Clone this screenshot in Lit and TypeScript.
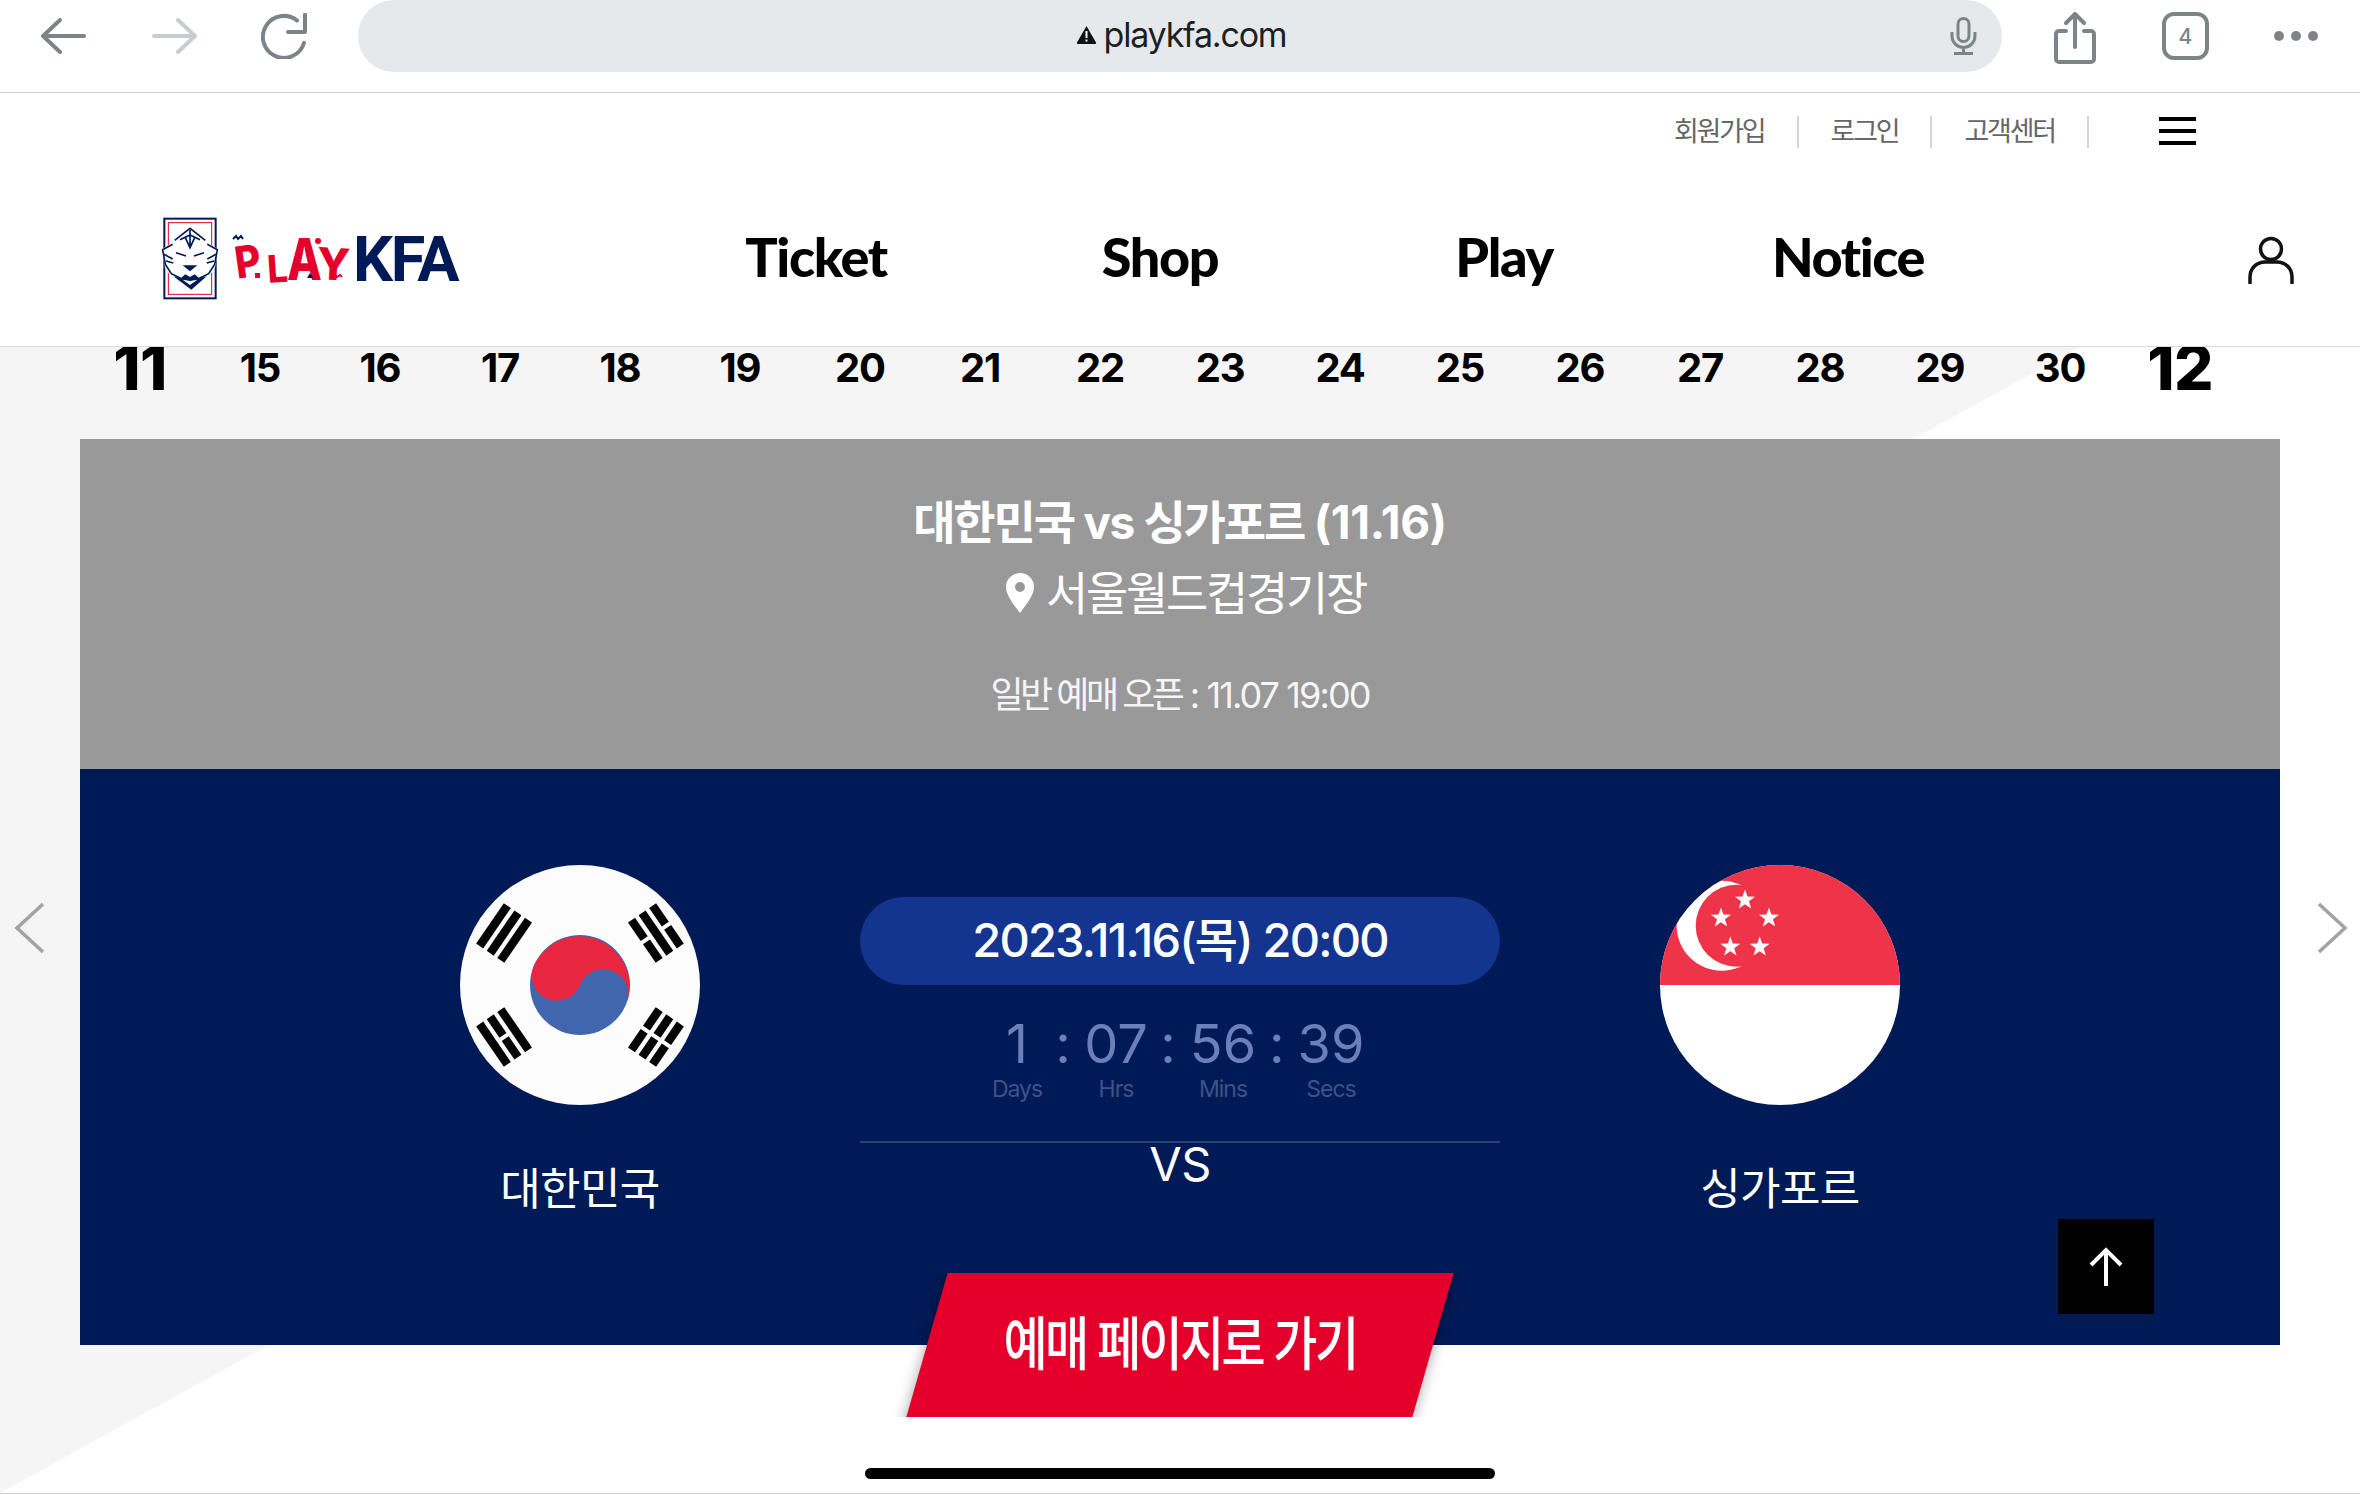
import { LitElement, html, css, svg } from "lit";
import { customElement } from "lit/decorators.js";

const star = (cx: number, cy: number, r: number) => {
  const pts: string[] = [];
  for (let i = 0; i < 10; i++) {
    const rad = i % 2 ? r * 0.4 : r;
    const a = (-90 + i * 36) * (Math.PI / 180);
    pts.push(`${(cx + rad * Math.cos(a)).toFixed(2)},${(cy + rad * Math.sin(a)).toFixed(2)}`);
  }
  return svg`<polygon points=${pts.join(" ")} fill="#fff"></polygon>`;
};

const trigram = (angle: number, pattern: boolean[]) => svg`
  <g transform="rotate(${angle} 120 120)" fill="#050505">
    ${pattern.map((solid, i) => {
      const y = 28 + (i - 1) * 12.8 - 4.25;
      return solid
        ? svg`<rect x="95.5" y=${y} width="49" height="8.5"></rect>`
        : svg`<rect x="95.5" y=${y} width="22.5" height="8.5"></rect><rect x="122" y=${y} width="22.5" height="8.5"></rect>`;
    })}
  </g>`;

const DATES = [15, 16, 17, 18, 19, 20, 21, 22, 23, 24, 25, 26, 27, 28, 29, 30];

@customElement("app-root")
export class AppRoot extends LitElement {
  static styles = css`
    :host {
      display: block;
      position: relative;
      width: 2360px;
      height: 1494px;
      overflow: hidden;
      background: #fff;
      font-family: Inter, "Noto Sans CJK KR", sans-serif;
      color: #000;
    }
    svg { display: block; }

    /* browser chrome */
    .toolbar {
      height: 92px;
      border-bottom: 1px solid #cfcfcf;
      display: flex;
      align-items: flex-start;
    }
    .back { margin: 18px 0 0 40px; }
    .forward { margin: 18px 0 0 66px; }
    .reload { margin: 13px 0 0 63px; }
    .url {
      margin-left: 51px;
      width: 1644px;
      height: 72px;
      border-radius: 36px;
      background: #e6e9ec;
      display: grid;
      grid-template-columns: 1fr auto 1fr;
      align-items: center;
    }
    .domain {
      grid-column: 2;
      display: flex;
      align-items: center;
      gap: 7px;
      font-size: 34px;
      letter-spacing: -1.2px;
      color: #1d1f21;
      margin-top: -3px;
    }
    .domain svg { margin-left: 2px; }
    .mic { grid-column: 3; justify-self: end; margin-right: 25px; }
    .share { margin: 12px 0 0 52px; }
    .tabs {
      margin: 12px 0 0 66px;
      width: 47px;
      height: 48px;
      box-sizing: border-box;
      border: 4px solid #7d8487;
      border-radius: 12px;
      display: flex;
      align-items: center;
      justify-content: center;
      font-size: 21px;
      font-weight: 500;
      color: #7d8487;
    }
    .dots { margin: 30px 0 0 64px; }

    /* site header */
    .header {
      height: 253px;
      border-bottom: 1px solid #d9d9d9;
      position: relative;
      z-index: 1;
      background: #fff;
    }
    .util {
      height: 79px;
      box-sizing: border-box;
      padding: 23px 164px 0 0;
      display: flex;
      justify-content: flex-end;
      align-items: flex-start;
      gap: 32px;
    }
    .util a {
      height: 32px;
      line-height: 32px;
      font-size: 27px;
      letter-spacing: -2.2px;
      color: #666;
    }
    .util i { width: 2px; height: 32px; background: #d5d5d5; }
    .burger {
      margin: 1px 0 0 38px;
      width: 37px;
      height: 28px;
      display: flex;
      flex-direction: column;
      justify-content: space-between;
    }
    .burger b { height: 4px; background: #000; }
    .nav {
      height: 172px;
      padding-bottom: 2px;
      display: flex;
      align-items: center;
      padding-left: 160px;
    }
    .logo { width: 484px; height: 90px; position: relative; display: flex; align-items: center; }
    .play {
      position: absolute;
      inset: 0;
      font-family: Inter, sans-serif;
      font-weight: 800;
      color: #e4002b;
      line-height: 1;
    }
    .play span { position: absolute; display: block; transform-origin: left top; }
    .p { left: 72px; top: 28px; font-size: 44px; transform: rotate(-8deg) scaleX(.9); }
    .dot1 { left: 95px; top: 60px; width: 5px; height: 5px; background: #e4002b; }
    .l { left: 106px; top: 37px; font-size: 38px; transform: rotate(-4deg) scaleX(.95); }
    .a { left: 127px; top: 17px; font-size: 58px; transform: scaleX(.78); }
    .y { left: 158px; top: 28px; font-size: 44px; transform: rotate(3deg); }
    .dot2 { left: 155px; top: 25px; width: 6px; height: 6px; border-radius: 50%; background: #e4002b; }
    .deco { position: absolute; left: 70px; top: 20px; }
    .kfa {
      position: absolute;
      left: 193px;
      top: 10px;
      font-family: Roboto, sans-serif;
      font-size: 63px;
      line-height: 74px;
      font-weight: 700;
      letter-spacing: -2.4px;
      color: #001a57;
    }
    .menu { display: grid; grid-template-columns: repeat(4, 344px); margin-top: -3px; }
    .menu a {
      text-align: center;
      font-family: Lato, sans-serif;
      font-size: 54px;
      font-weight: 900;
      letter-spacing: -1.4px;
      color: #000;
    }
    .user { margin: 3px 0 0 228px; }

    /* main */
    .main {
      height: 1146px;
      padding: 0 80px;
      border-bottom: 1px solid #cfcfcf;
      background-image: linear-gradient(to bottom right, #f5f5f5 49.95%, #fff 50.05%);
      background-size: 2080px 100%;
      background-repeat: no-repeat;
      position: relative;
    }
    .dates {
      height: 92px;
      display: grid;
      grid-template-columns: repeat(18, 120px);
      align-items: start;
    }
    .dates span {
      text-align: center;
      font-size: 40px;
      line-height: 42px;
      font-weight: 700;
      letter-spacing: -1.2px;
    }
    .dates .month {
      font-size: 62px;
      font-weight: 800;
      letter-spacing: -0.6px;
    }
    .info {
      height: 330px;
      box-sizing: border-box;
      padding-top: 48px;
      background: #999;
      color: #fff;
      text-align: center;
    }
    .title { font-size: 46px; line-height: 70px; font-weight: 700; letter-spacing: -1.4px; }
    .title .ko { letter-spacing: -2.15px; }
    .title .nums { letter-spacing: -0.3px; }
    .venue {
      font-size: 46px;
      line-height: 70px;
      font-weight: 400;
      letter-spacing: -2.3px;
      display: flex;
      justify-content: center;
      align-items: center;
      gap: 12px;
      padding-left: 12px;
      margin-top: 1px;
    }
    .open { margin-top: 42px; font-size: 36px; line-height: 50px; letter-spacing: -1.9px; color: #f6f6f6; }
    .open .ko { letter-spacing: -3.5px; }
    .match {
      height: 576px;
      background: #001a57;
      position: relative;
      display: flex;
      justify-content: center;
      gap: 120px;
      color: #fff;
    }
    .team { width: 320px; padding-top: 96px; text-align: center; }
    .flag { margin: 0 auto 54px; }
    .name { font-size: 44px; line-height: 60px; letter-spacing: -0.6px; }
    .center { width: 640px; padding-top: 128px; text-align: center; }
    .when {
      height: 88px;
      line-height: 86px;
      border-radius: 44px;
      background: #133590;
      font-size: 47px;
      font-weight: 500;
      letter-spacing: -1.8px;
    }
    .count {
      margin-top: 28px;
      display: grid;
      grid-template-columns: 72px 20px 86px 18px 92px 14px 96px;
      justify-content: center;
      grid-template-rows: 60px 32px;
      align-items: center;
    }
    .num { font-size: 54px; color: #6b80b8; }
    .lab { font-size: 23px; letter-spacing: -1px; color: #3f5187; }
    .rule { margin-top: 36px; height: 2px; background: #2b4277; }
    .vs { font-size: 47px; line-height: 42px; font-weight: 400; letter-spacing: -0.5px; }
    .cta {
      position: absolute;
      left: 800px;
      top: 504px;
      width: 600px;
      height: 144px;
      overflow: hidden;
      display: flex;
      align-items: center;
      justify-content: center;
      isolation: isolate;
    }
    .cta::before {
      content: "";
      position: absolute;
      z-index: -1;
      left: 47px;
      width: 506px;
      top: -30px;
      bottom: -30px;
      background: #e4002b;
      transform: skewX(-16deg);
      box-shadow: 0 0 14px rgba(0, 0, 0, 0.35);
    }
    .cta span {
      display: inline-block;
      font-size: 48px;
      font-weight: 500;
      letter-spacing: -2.6px;
      color: #fff;
      margin-top: -10px;
      transform: scaleY(1.2);
    }
    .top {
      position: absolute;
      left: 1978px;
      top: 450px;
      width: 96px;
      height: 95px;
      background: #000;
      display: flex;
      align-items: center;
      justify-content: center;
    }
    .chev { position: absolute; top: 555px; }
    .chev.l1 { left: 14px; }
    .chev.r1 { left: 2318px; }
    .home {
      position: absolute;
      left: 865px;
      top: 1121px;
      width: 630px;
      height: 11px;
      border-radius: 6px;
      background: #000;
    }
  `;

  render() {
    return html`
      <div class="toolbar">
        <svg class="back" width="46" height="36" viewBox="0 0 46 36" fill="none" stroke="#7d8487" stroke-width="4" stroke-linecap="round" stroke-linejoin="round"><path d="M44 18H4M20 2 3 18l17 16"/></svg>
        <svg class="forward" width="46" height="36" viewBox="0 0 46 36" fill="none" stroke="#c9cccd" stroke-width="4" stroke-linecap="round" stroke-linejoin="round"><path d="M2 18h40M26 2l17 16-17 16"/></svg>
        <svg class="reload" width="46" height="46" viewBox="0 0 46 46" fill="none" stroke="#7d8487" stroke-width="4" stroke-linecap="round"><path d="M36 7.500A21 21 0 1 0 43 30"/><path d="M44 1.500V19H27" stroke-linejoin="round"/></svg>
        <div class="url">
          <div class="domain">
            <svg width="21" height="19" viewBox="0 0 21 19"><path d="M10.500 1 20 17.500a1 1 0 0 1-1 1.500H2a1 1 0 0 1-1-1.500z" fill="#111"/><rect x="9.500" y="6" width="2" height="7" fill="#fff"/><rect x="9.500" y="14.500" width="2" height="2" fill="#fff"/></svg>
            playkfa.com
          </div>
          <svg class="mic" width="27" height="38" viewBox="0 0 27 38" fill="none" stroke="#7d8487" stroke-width="3"><rect x="8" y="1.500" width="11" height="23" rx="5.500"/><path d="M2 15v4a11.500 11.500 0 0 0 23 0v-4M13.500 31v5M4 36.500h19"/></svg>
        </div>
        <svg class="share" width="42" height="52" viewBox="0 0 42 52" fill="none" stroke="#7d8487" stroke-width="4" stroke-linecap="round" stroke-linejoin="round"><path d="M21 3v32M12 11l9-9 9 9"/><path d="M12 19H5a3 3 0 0 0-3 3v25a3 3 0 0 0 3 3h32a3 3 0 0 0 3-3V22a3 3 0 0 0-3-3h-7"/></svg>
        <div class="tabs">4</div>
        <svg class="dots" width="46" height="12" viewBox="0 0 46 12" fill="#7d8487"><circle cx="6" cy="6" r="5"/><circle cx="23" cy="6" r="5"/><circle cx="40" cy="6" r="5"/></svg>
      </div>

      <div class="header">
        <div class="util">
          <a>회원가입</a><i></i><a>로그인</a><i></i><a>고객센터</a><i></i>
          <div class="burger"><b></b><b></b><b></b></div>
        </div>
        <div class="nav">
          <div class="logo">
            <svg width="60" height="85" viewBox="60 55 180 255">
              <rect x="73" y="63" width="154" height="239" fill="#fff" stroke="#001a57" stroke-width="6"/>
              <rect x="85" y="75" width="130" height="215" fill="#fff" stroke="#e4002b" stroke-width="3"/>
              <path d="M150 88 195 130l40 25-10 55-20 30-55 38-55-38-20-30-10-55 40-25z" fill="#fff"/>
              <g fill="none" stroke="#001a57" stroke-width="5" stroke-linejoin="miter">
                <path d="M104 128 150 92l46 36"/>
                <path d="M120 126l30-14 30 14M136 120l14 30 14-30M150 96v50"/>
                <path d="M98 140 68 156l8 44 18 28 28 14M202 140l30 16-8 44-18 28-28 14"/>
                <path d="M72 170l26 14M78 190l22 6M228 170l-26 14M222 190l-22 6"/>
                <path d="M108 165l30 10M192 165l-30 10"/>
              </g>
              <g fill="#001a57">
                <path d="M128 203h44l-22 18z"/>
                <path fill-rule="evenodd" d="M100 236l22 6 14-12 14 8 14-8 14 12 22-6-46 40zM128 246l22 16 22-16-22 4z"/>
              </g>
            </svg>
            <div class="play">
              <span class="p">P</span><span class="dot1"></span>
              <span class="l">L</span><span class="a">A</span><span class="y">Y</span><span class="dot2"></span>
            </div>
            <svg class="deco" width="120" height="50" viewBox="0 0 120 50" fill="none">
              <path d="M3 6l3-3 2 3 3-3 2 3" stroke="#001a57" stroke-width="2"/>
              <path d="M80 46l3 5h-6z" fill="#001a57" transform="translate(0 -6)"/>
              <path d="M102 44l3-2 2 2 3-2 2 2" stroke="#e4002b" stroke-width="2"/>
            </svg>
            <div class="kfa">KFA</div>
          </div>
          <div class="menu"><a>Ticket</a><a>Shop</a><a>Play</a><a>Notice</a></div>
          <svg class="user" width="46" height="48" viewBox="0 0 46 48" fill="none" stroke="#111" stroke-width="3.500"><circle cx="23" cy="13" r="10.500"/><path d="M2 47v-6c0-9 7-15 15-15h12c8 0 15 6 15 15v6" stroke-linecap="round"/></svg>
        </div>
      </div>

      <div class="main">
        <div class="dates">
          <span class="month">11</span>
          ${DATES.map((d) => html`<span>${d}</span>`)}
          <span class="month">12</span>
        </div>
        <div class="info">
          <div class="title"><span class="ko">대한민국</span> vs <span class="ko">싱가포르</span> <span class="nums">(11.16)</span></div>
          <div class="venue">
            <svg width="28" height="40" viewBox="0 0 28 40"><path fill-rule="evenodd" fill="#fff" d="M14 0a14 14 0 0 1 14 14c0 9-9 19-14 26C9 33 0 23 0 14A14 14 0 0 1 14 0zm0 9a5 5 0 1 0 0 10 5 5 0 0 0 0-10z"/></svg>
            서울월드컵경기장
          </div>
          <div class="open"><span class="ko">일반 예매 오픈</span> : 11.07 19:00</div>
        </div>
        <div class="match">
          <div class="team">
            <svg class="flag" width="240" height="240" viewBox="0 0 240 240">
              <circle cx="120" cy="120" r="120" fill="#fcfcfd"/>
              ${trigram(-55.6, [true, true, true])}
              ${trigram(55.6, [false, true, false])}
              ${trigram(-124.4, [true, false, true])}
              ${trigram(124.4, [false, false, false])}
              <circle cx="120" cy="120" r="50" fill="#4166ae"/>
              <path d="M73 103A50 50 0 0 1 167 137A25 25 0 0 0 120 120A25 25 0 0 1 73 103Z" fill="#e9263f"/>
            </svg>
            <div class="name">대한민국</div>
          </div>
          <div class="center">
            <div class="when">2023.11.16(목) 20:00</div>
            <div class="count">
              <span class="num">1</span><span class="num">:</span>
              <span class="num">07</span><span class="num">:</span>
              <span class="num">56</span><span class="num">:</span>
              <span class="num">39</span>
              <span class="lab">Days</span><span></span>
              <span class="lab">Hrs</span><span></span>
              <span class="lab">Mins</span><span></span>
              <span class="lab">Secs</span>
            </div>
            <div class="rule"></div>
            <div class="vs">VS</div>
          </div>
          <div class="team">
            <svg class="flag" width="240" height="240" viewBox="0 0 240 240">
              <defs><clipPath id="sg"><circle cx="120" cy="120" r="120"/></clipPath></defs>
              <g clip-path="url(#sg)">
                <rect width="240" height="240" fill="#fff"/>
                <rect width="240" height="120" fill="#ef3348"/>
                <circle cx="61.700" cy="60.700" r="45" fill="#fff"/>
                <circle cx="76.700" cy="60.700" r="41" fill="#ef3348"/>
                ${star(85, 35, 10.500)}${star(61, 53, 10.500)}${star(109, 53, 10.500)}${star(70.300, 82, 10.500)}${star(99.700, 82, 10.500)}
              </g>
            </svg>
            <div class="name">싱가포르</div>
          </div>
          <div class="cta"><span>예매 페이지로 가기</span></div>
          <div class="top">
            <svg width="36" height="40" viewBox="0 0 36 40" fill="none" stroke="#fff" stroke-width="4"><path d="M18 39V3M3 18 18 3l15 15"/></svg>
          </div>
        </div>
        <svg class="chev l1" width="30" height="52" viewBox="0 0 30 52" fill="none" stroke="#a3a3a3" stroke-width="3.500"><path d="M29 2 3 26l26 24"/></svg>
        <svg class="chev r1" width="30" height="52" viewBox="0 0 30 52" fill="none" stroke="#a3a3a3" stroke-width="3.500"><path d="M1 2l26 24L1 50"/></svg>
        <div class="home"></div>
      </div>
    `;
  }
}
